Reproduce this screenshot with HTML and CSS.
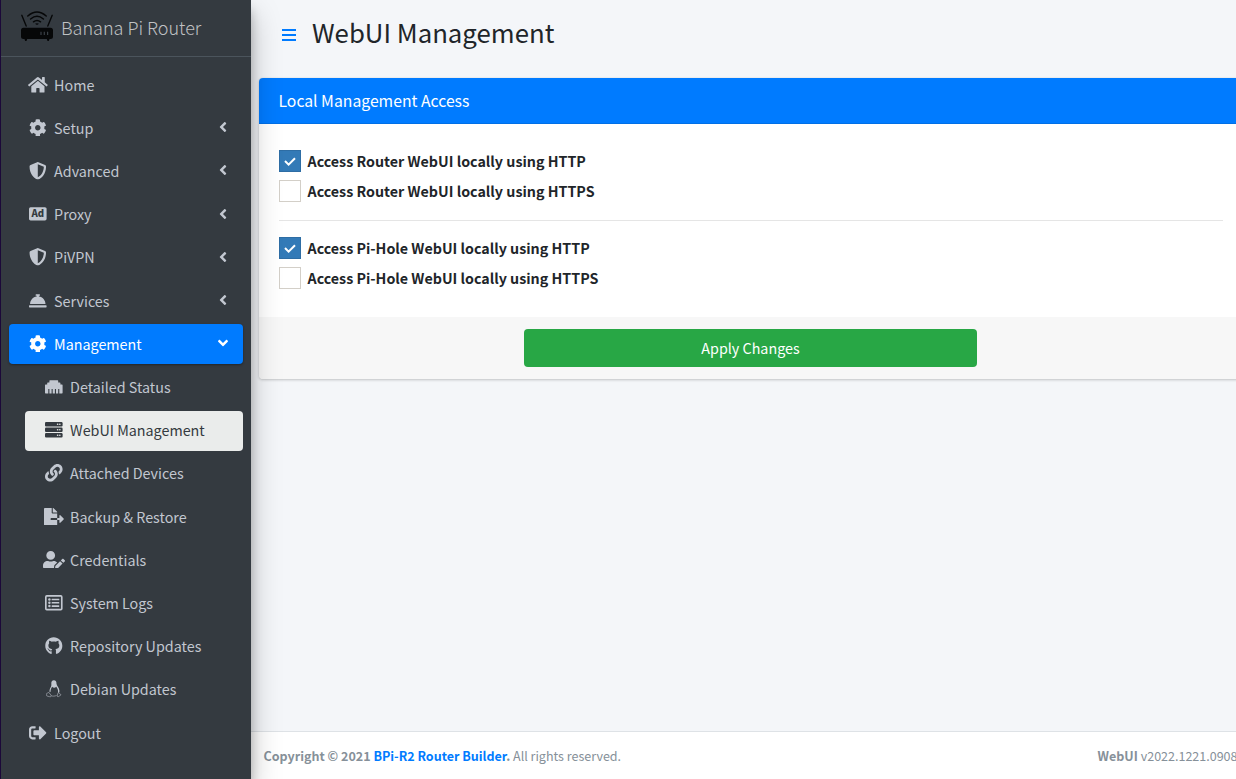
FILE: index.html
```html
<!DOCTYPE html>
<html lang="en">
<head>
<meta charset="utf-8">
<title>WebUI Management</title>
<link rel="stylesheet" href="styles.css">
</head>
<body>
<svg class="defs" width="0" height="0">
  <symbol id="angle" viewBox="0 0 256 512"><path d="M31.7 239l136-136c9.4-9.4 24.6-9.4 33.9 0l22.6 22.6c9.4 9.4 9.4 24.6 0 33.9L127.9 256l96.4 96.4c9.4 9.4 9.4 24.6 0 33.9L201.7 409c-9.4 9.4-24.6 9.4-33.9 0l-136-136c-9.5-9.4-9.5-24.6-.1-34z"/></symbol>
  <symbol id="cog" viewBox="0 0 512 512"><path d="M487.4 315.7l-42.6-24.6c4.3-23.2 4.3-47 0-70.2l42.6-24.6c4.9-2.8 7.1-8.6 5.5-14-11.1-35.6-30-67.8-54.7-94.6-3.8-4.1-10-5.1-14.8-2.3L380.8 110c-17.9-15.4-38.5-27.3-60.8-35.1V25.8c0-5.6-3.9-10.5-9.4-11.7-36.7-8.2-74.3-7.8-109.2 0-5.5 1.2-9.4 6.1-9.4 11.7V75c-22.2 7.9-42.8 19.8-60.8 35.1L88.7 85.5c-4.9-2.8-11-1.9-14.8 2.3-24.7 26.7-43.6 58.9-54.7 94.6-1.7 5.4.6 11.2 5.5 14L67.3 221c-4.3 23.2-4.3 47 0 70.2l-42.6 24.6c-4.9 2.8-7.1 8.6-5.5 14 11.1 35.6 30 67.8 54.7 94.6 3.8 4.1 10 5.1 14.8 2.3l42.6-24.6c17.9 15.4 38.5 27.3 60.8 35.1v49.2c0 5.6 3.9 10.5 9.4 11.7 36.7 8.2 74.3 7.8 109.2 0 5.5-1.2 9.4-6.1 9.4-11.7v-49.2c22.2-7.9 42.8-19.8 60.8-35.1l42.6 24.6c4.9 2.8 11 1.9 14.8-2.3 24.7-26.7 43.6-58.9 54.7-94.6 1.5-5.5-.7-11.3-5.6-14.1zM256 336c-44.1 0-80-35.9-80-80s35.9-80 80-80 80 35.9 80 80-35.9 80-80 80z"/></symbol>
  <symbol id="shield" viewBox="0 0 512 512"><path d="M466.5 83.7l-192-80a48.15 48.15 0 0 0-36.9 0l-192 80C27.7 91.1 16 108.6 16 128c0 198.5 114.5 335.7 221.5 380.3 11.8 4.9 25.1 4.9 36.9 0C360.1 472.6 496 349.3 496 128c0-19.4-11.7-36.9-29.5-44.3zM256.1 446.3l-.1-381 175.9 73.3c-3.3 151.4-82.1 261.1-175.8 307.7z"/></symbol>
</svg>

<div class="wrapper">
  <aside class="sidebar">
    <a class="brand">
      <svg class="brand-logo" viewBox="0 0 34 32">
        <path d="M1.800 5.300L6.200 16M32.200 5.300L27.800 16" fill="none" stroke="#060708" stroke-width="1.400" stroke-linecap="round"/>
        <path d="M7.800 6Q17-2 26.200 6M10.600 9Q17 3.600 23.400 9M13.500 11.800Q17 9 20.500 11.800" fill="none" stroke="#060708" stroke-width="1.500" stroke-linecap="round"/>
        <path d="M15 13.800Q17 12.700 19 13.800L17 14.900z" fill="#060708"/>
        <path d="M3.500 17.800h27a2.500 2.500 0 0 1 2.500 2.500v6.200a2.500 2.500 0 0 1-2.500 2.500h-1l-.7 2h-1.300l-.7-2H7.200l-.7 2H5.200L4.500 29h-1A2.500 2.500 0 0 1 1 26.500v-6.200a2.500 2.500 0 0 1 2.500-2.500z" fill="#060708"/>
        <path d="M21 21.700v3.300M24.300 21.700v3.300M27.600 21.700v3.300" stroke="#3a4046" stroke-width="1.200"/>
      </svg>
      <span class="brand-text">Banana Pi Router</span>
    </a>
    <nav class="nav">
      <a class="nav-link"><span class="ico"><svg class="w576" viewBox="0 0 576 512"><path d="M280.37 148.26L96 300.11V464a16 16 0 0 0 16 16l112.06-.29a16 16 0 0 0 15.92-16V368a16 16 0 0 1 16-16h64a16 16 0 0 1 16 16v95.64a16 16 0 0 0 16 16.05L464 480a16 16 0 0 0 16-16V300L295.67 148.26a12.19 12.19 0 0 0-15.3 0zM571.6 251.47L488 182.56V44.05a12 12 0 0 0-12-12h-56a12 12 0 0 0-12 12v72.61L318.47 43a48 48 0 0 0-61 0L4.34 251.47a12 12 0 0 0-1.6 16.9l25.5 31A12 12 0 0 0 45.15 301l235.22-193.74a12.19 12.19 0 0 1 15.3 0L530.9 301a12 12 0 0 0 16.9-1.6l25.5-31a12 12 0 0 0-1.700-16.930z"/></svg></span><span class="label">Home</span></a>
      <a class="nav-link"><span class="ico"><svg><use href="#cog"/></svg></span><span class="label">Setup</span><svg class="angle"><use href="#angle"/></svg></a>
      <a class="nav-link"><span class="ico"><svg><use href="#shield"/></svg></span><span class="label">Advanced</span><svg class="angle"><use href="#angle"/></svg></a>
      <a class="nav-link"><span class="ico"><svg viewBox="0 0 512 512"><rect y="64" width="512" height="384" rx="48"/><text class="ad" x="256" y="355" text-anchor="middle">Ad</text></svg></span><span class="label">Proxy</span><svg class="angle"><use href="#angle"/></svg></a>
      <a class="nav-link"><span class="ico"><svg><use href="#shield"/></svg></span><span class="label">PiVPN</span><svg class="angle"><use href="#angle"/></svg></a>
      <a class="nav-link"><span class="ico"><svg viewBox="0 0 512 512"><path d="M288 130.540V112h16c8.840 0 16-7.160 16-16V80c0-8.840-7.160-16-16-16h-96c-8.840 0-16 7.160-16 16v16c0 8.840 7.160 16 16 16h16v18.540C115.490 146.110 32 239.180 32 352h448c0-112.820-83.490-205.890-192-221.460zM496 384H16c-8.840 0-16 7.160-16 16v32c0 8.840 7.160 16 16 16h480c8.840 0 16-7.160 16-16v-32c0-8.840-7.160-16-16-16z"/></svg></span><span class="label">Services</span><svg class="angle"><use href="#angle"/></svg></a>
      <a class="nav-link active"><span class="ico"><svg><use href="#cog"/></svg></span><span class="label">Management</span><svg class="angle open"><use href="#angle"/></svg></a>
      <div class="tree">
        <a class="nav-link"><span class="ico"><svg viewBox="0 0 512 512"><path d="M496 192h-48v-48c0-8.800-7.200-16-16-16h-48V80c0-8.800-7.200-16-16-16H144c-8.800 0-16 7.200-16 16v48H80c-8.800 0-16 7.200-16 16v48H16c-8.800 0-16 7.200-16 16v224c0 8.800 7.200 16 16 16h80V320h32v128h64V320h32v128h64V320h32v128h64V320h32v128h80c8.800 0 16-7.200 16-16V208c0-8.800-7.200-16-16-16z"/></svg></span><span class="label">Detailed Status</span></a>
        <a class="nav-link current"><span class="ico"><svg viewBox="0 0 512 512"><g><rect y="32" width="512" height="128" rx="32"/><rect y="192" width="512" height="128" rx="32"/><rect y="352" width="512" height="128" rx="32"/></g><g fill="#eaeceb"><circle cx="368" cy="96" r="24"/><circle cx="432" cy="96" r="24"/><circle cx="368" cy="256" r="24"/><circle cx="432" cy="256" r="24"/><circle cx="368" cy="416" r="24"/><circle cx="432" cy="416" r="24"/></g></svg></span><span class="label">WebUI Management</span></a>
        <a class="nav-link"><span class="ico"><svg viewBox="0 0 512 512"><path d="M326.612 185.391c59.747 59.809 58.927 155.698.36 214.590-.110.120-.240.250-.360.370l-67.200 67.200c-59.270 59.270-155.699 59.262-214.960 0-59.270-59.260-59.270-155.700 0-214.960l37.106-37.106c9.840-9.840 26.786-3.300 27.294 10.606.648 17.722 3.826 35.527 9.690 52.721 1.986 5.822.567 12.262-3.783 16.612l-13.087 13.087c-28.026 28.026-28.905 73.660-1.155 101.960 28.024 28.579 74.086 28.749 102.325.510l67.200-67.190c28.191-28.191 28.073-73.757 0-101.830-3.701-3.694-7.429-6.564-10.341-8.569a16.037 16.037 0 0 1-6.947-12.606c-.396-10.567 3.348-21.456 11.698-29.806l21.054-21.055c5.521-5.521 14.182-6.199 20.584-1.731a152.482 152.482 0 0 1 20.522 17.197zM467.547 44.449c-59.261-59.262-155.690-59.270-214.960 0l-67.200 67.200c-.120.120-.250.250-.360.370-58.566 58.892-59.387 154.781.360 214.590a152.454 152.454 0 0 0 20.521 17.196c6.402 4.468 15.064 3.789 20.584-1.731l21.054-21.055c8.350-8.350 12.094-19.239 11.698-29.806a16.037 16.037 0 0 0-6.947-12.606c-2.912-2.005-6.640-4.875-10.341-8.569-28.073-28.073-28.191-73.639 0-101.830l67.200-67.190c28.239-28.239 74.300-28.069 102.325.510 27.750 28.300 26.872 73.934-1.155 101.960l-13.087 13.087c-4.350 4.350-5.769 10.790-3.783 16.612 5.864 17.194 9.042 34.999 9.690 52.721.509 13.906 17.454 20.446 27.294 10.606l37.106-37.106c59.271-59.259 59.271-155.699.001-214.959z"/></svg></span><span class="label">Attached Devices</span></a>
        <a class="nav-link"><span class="ico"><svg class="w576" viewBox="0 0 576 512"><path d="M384 121.900c0-6.300-2.500-12.400-7-16.900L279.100 7c-4.500-4.500-10.600-7-17-7H256v128h128zM571 308l-95.700-96.400c-10.100-10.100-27.400-3-27.400 11.300V288h-64v64h64v65.200c0 14.300 17.300 21.400 27.400 11.300L571 332c6.600-6.600 6.600-17.400 0-24zm-379 28v-32c0-8.800 7.200-16 16-16h176V160H248c-13.200 0-24-10.800-24-24V0H24C10.700 0 0 10.700 0 24v464c0 13.300 10.700 24 24 24h336c13.300 0 24-10.700 24-24V352H208c-8.800 0-16-7.200-16-16z"/></svg></span><span class="label">Backup &amp; Restore</span></a>
        <a class="nav-link"><span class="ico"><svg class="w640" viewBox="0 0 640 512"><path d="M224 256c70.700 0 128-57.300 128-128S294.700 0 224 0 96 57.300 96 128s57.300 128 128 128zm89.600 32h-16.700c-22.200 10.200-46.900 16-72.900 16s-50.600-5.800-72.900-16h-16.700C60.200 288 0 348.200 0 422.400V464c0 26.500 21.500 48 48 48h274.900c-2.400-6.800-3.400-14-2.600-21.300l6.800-60.900 1.200-11.100 7.900-7.900 77.300-77.300c-24.500-27.700-60-45.500-99.900-45.500zm45.300 145.300l-6.800 61c-1.100 10.200 7.500 18.800 17.600 17.600l60.900-6.800 137.900-137.900-71.700-71.700-137.900 137.800zM633 268.900L595.100 231c-9.300-9.300-24.500-9.300-33.800 0l-37.800 37.800-4.100 4.100 71.800 71.700 41.800-41.800c9.300-9.400 9.300-24.500 0-33.900z"/></svg></span><span class="label">Credentials</span></a>
        <a class="nav-link"><span class="ico"><svg viewBox="0 0 512 512"><rect x="24" y="56" width="464" height="400" rx="28" fill="none" stroke="currentColor" stroke-width="48"/><circle cx="128" cy="160" r="36"/><circle cx="128" cy="256" r="36"/><circle cx="128" cy="352" r="36"/><rect x="192" y="136" width="224" height="48" rx="12"/><rect x="192" y="232" width="224" height="48" rx="12"/><rect x="192" y="328" width="224" height="48" rx="12"/></svg></span><span class="label">System Logs</span></a>
        <a class="nav-link"><span class="ico"><svg viewBox="-8 0 512 512"><path d="M244.800 8C106.100 8 0 113.300 0 252c0 110.900 69.800 205.800 169.500 239.200 12.800 2.300 17.300-5.600 17.300-12.100 0-6.200-.3-40.400-.3-61.400 0 0-70 15-84.700-29.800 0 0-11.400-29.100-27.800-36.600 0 0-22.900-15.700 1.600-15.400 0 0 24.900 2 38.600 25.800 21.900 38.600 58.600 27.500 72.900 20.900 2.300-16 8.800-27.100 16-33.700-55.900-6.200-112.300-14.300-112.300-110.500 0-27.500 7.600-41.300 23.600-58.900-2.600-6.500-11.100-33.300 2.600-67.900 20.900-6.500 69 27 69 27 20-5.600 41.500-8.500 62.800-8.500s42.800 2.900 62.800 8.500c0 0 48.100-33.600 69-27 13.700 34.700 5.200 61.400 2.600 67.900 16 17.700 25.800 31.500 25.800 58.900 0 96.500-58.900 104.200-114.800 110.500 9.200 7.900 17 22.900 17 46.400 0 33.700-.3 75.400-.3 83.600 0 6.500 4.600 14.400 17.300 12.100C428.200 457.800 496 362.900 496 252 496 113.300 383.500 8 244.800 8z"/></svg></span><span class="label">Repository Updates</span></a>
        <a class="nav-link"><span class="ico"><svg viewBox="0 0 512 512"><path d="M184 112c-4-70 20-104 75-106 56 0 78 36 75 102 6 60 74 100 84 190 4 30 0 54-8 74l-30-12c8-70-18-120-52-166-16 22-42 34-62 34-22 0-42-12-58-34-32 52-50 94-44 150l-30 4c-10-50 10-90 32-134 16-30 22-50 18-102z"/><path d="M114 362l62 84c14 30-10 48-40 40l-84-22c-14-8-6-30-6-46 0-22-2-34 26-38 18-4 26-18 42-18zM378 372c18-16 32 6 44 26 12 16 40 18 44 30 2 18-30 22-54 42-26 24-56 20-56-6zM180 458c46 20 104 14 156-8" fill="none" stroke="currentColor" stroke-width="16"/></svg></span><span class="label">Debian Updates</span></a>
      </div>
      <a class="nav-link"><span class="ico"><svg viewBox="0 0 512 512"><path d="M497 273L329 441c-15 15-41 4.500-41-17v-96H152c-13.300 0-24-10.700-24-24v-96c0-13.300 10.700-24 24-24h136V88c0-21.400 25.900-32 41-17l168 168c9.300 9.400 9.300 24.600 0 34zM192 436v-40c0-6.600-5.400-12-12-12H96c-17.700 0-32-14.300-32-32V160c0-17.700 14.300-32 32-32h84c6.600 0 12-5.400 12-12V76c0-6.600-5.400-12-12-12H96c-53 0-96 43-96 96v192c0 53 43 96 96 96h84c6.600 0 12-5.400 12-12z"/></svg></span><span class="label">Logout</span></a>
    </nav>
  </aside>

  <div class="page">
    <header class="topbar">
      <svg class="bars" viewBox="0 0 14 12"><path d="M0 0h14v2H0zM0 5h14v2H0zM0 10h14v2H0z"/></svg>
      <h1 class="title">WebUI Management</h1>
    </header>
    <main class="content">
      <section class="card">
        <h3 class="card-header"><span>Local Management Access</span></h3>
        <div class="card-body">
          <label class="check"><span class="box on"><svg viewBox="0 0 12 9"><path d="M1 4l3.600 3.600L11 1.200"/></svg></span><span>Access Router WebUI locally using HTTP</span></label>
          <label class="check"><span class="box"></span><span>Access Router WebUI locally using HTTPS</span></label>
          <hr class="rule">
          <label class="check"><span class="box on"><svg viewBox="0 0 12 9"><path d="M1 4l3.600 3.600L11 1.200"/></svg></span><span>Access Pi-Hole WebUI locally using HTTP</span></label>
          <label class="check"><span class="box"></span><span>Access Pi-Hole WebUI locally using HTTPS</span></label>
        </div>
        <div class="card-footer"><button class="apply">Apply Changes</button></div>
      </section>
    </main>
    <footer class="footer">
      <div class="copy"><strong>Copyright © 2021 <a>BPi-R2 Router Builder</a>.</strong> All rights reserved.</div>
      <div class="version"><strong>WebUI</strong> v2022.1221.0908</div>
    </footer>
  </div>
</div>
</body>
</html>
```
FILE: styles.css
```css
* { box-sizing: border-box; }
body {
  margin: 0;
  font-family: "Noto Sans CJK SC", "Source Sans Pro", sans-serif;
  font-size: 14.320px;
  color: #212529;
  background: #f4f6f9;
}
.defs { display: block; }
.wrapper { display: flex; height: 779px; overflow: hidden; }

.sidebar {
  position: relative;
  z-index: 2;
  flex: 0 0 251px;
  background: #343a40;
  border-left: 1px solid #1b0839;
  box-shadow: 0 14px 28px rgba(0,0,0,.25), 0 10px 10px rgba(0,0,0,.22);
}
.brand {
  display: flex;
  align-items: center;
  height: 57px;
  padding: 0 0 4px 19px;
  border-bottom: 1px solid #4b545c;
}
.brand-logo { flex: none; width: 34px; height: 32px; }
.brand-text { margin: 2px 0 0 7px; font-size: 18px; font-weight: 300; line-height: 24px; color: rgba(255,255,255,.7); white-space: nowrap; }

.nav { display: flex; flex-direction: column; gap: 3.200px; padding: 8px 8px 0; }
.tree { display: flex; flex-direction: column; gap: 3.200px; padding-left: 16px; }
.nav-link {
  display: flex;
  align-items: center;
  height: 40px;
  padding: 0 16px 0 16.300px;
  border-radius: 4px;
  color: #c2c7d0;
  line-height: 24px;
  white-space: nowrap;
}
.nav-link.active { background: #007bff; color: #fff; box-shadow: 0 1px 3px rgba(0,0,0,.12), 0 1px 2px rgba(0,0,0,.24); }
.nav-link.current { background: #eaeceb; color: #343a40; }
.ico { display: flex; justify-content: center; flex: 0 0 25.600px; margin-right: 3.200px; }
.ico svg { flex: none; width: 17.600px; height: 17.600px; margin-top: -1px; fill: currentColor; }
.ico .w576 { width: 19.800px; }
.ico .w640 { width: 22px; }
.ad { font: 900 280px "Noto Sans CJK SC", sans-serif; fill: #343a40; }
.label { flex: 1; margin-bottom: .6px; }
.angle { width: 8px; height: 16px; margin: -2px .5px 0 0; fill: currentColor; }
.angle.open { transform: rotate(-90deg); }

.page { flex: 1; min-width: 0; display: flex; flex-direction: column; }
.topbar { display: flex; align-items: center; height: 78px; padding: 0 0 10px 31px; }
.bars { width: 14px; height: 12px; margin-top: 1px; fill: #007bff; }
.title { margin: -5px 0 0 16px; font-size: 25.780px; font-weight: 400; line-height: 34px; }
.content { flex: 1; padding-left: 8px; }
.card {
  margin-right: -7px;
  border-radius: 4px;
  background: #fff;
  box-shadow: 0 0 1px rgba(0,0,0,.125), 0 1px 3px rgba(0,0,0,.2);
}
.card-header {
  display: flex;
  align-items: center;
  height: 46px;
  margin: 0;
  padding: 0 19.500px;
  border-bottom: 1px solid #006fe6;
  border-radius: 4px 4px 0 0;
  background: #007bff;
  color: #fff;
  font-size: 15.750px;
  font-weight: 400;
  line-height: 20px;
}
.card-body { height: 193px; padding: 26px 20px 0; }
.check { display: flex; align-items: center; height: 22px; margin-bottom: 8px; font-size: 14.280px; font-weight: 700; line-height: 22px; }
.box { display: flex; align-items: center; justify-content: center; flex: none; width: 22px; height: 22px; margin-right: 6.500px; border: 1px solid #d3cfc8; background: #fff; }
.box.on { border-color: #2e6da4; background: #337ab7; }
.box svg { width: 12px; height: 9px; fill: none; stroke: #fff; stroke-width: 2; }
.rule { height: 1px; margin: 18px 0 16px; border: 0; background: #e5e5e5; }
.card-footer { display: flex; justify-content: center; height: 62px; padding: 12px 1px 12px 0; border-radius: 0 0 4px 4px; background: #f7f7f7; }
.apply { width: 453px; height: 38px; margin-right: 1px; padding: 0 0 0 1px; border: 0; border-radius: 4px; background: #28a745; color: #fff; font: inherit; line-height: 38px; }

.footer {
  display: flex;
  justify-content: space-between;
  height: 48px;
  padding: 14px 0 0 12.500px;
  border-top: 1px solid #dee2e6;
  background: #fff;
  color: #869099;
  font-size: 12.530px;
  line-height: 20px;
  white-space: nowrap;
}
.footer a { color: #007bff; }
.version { margin-right: -1.500px; }
```
